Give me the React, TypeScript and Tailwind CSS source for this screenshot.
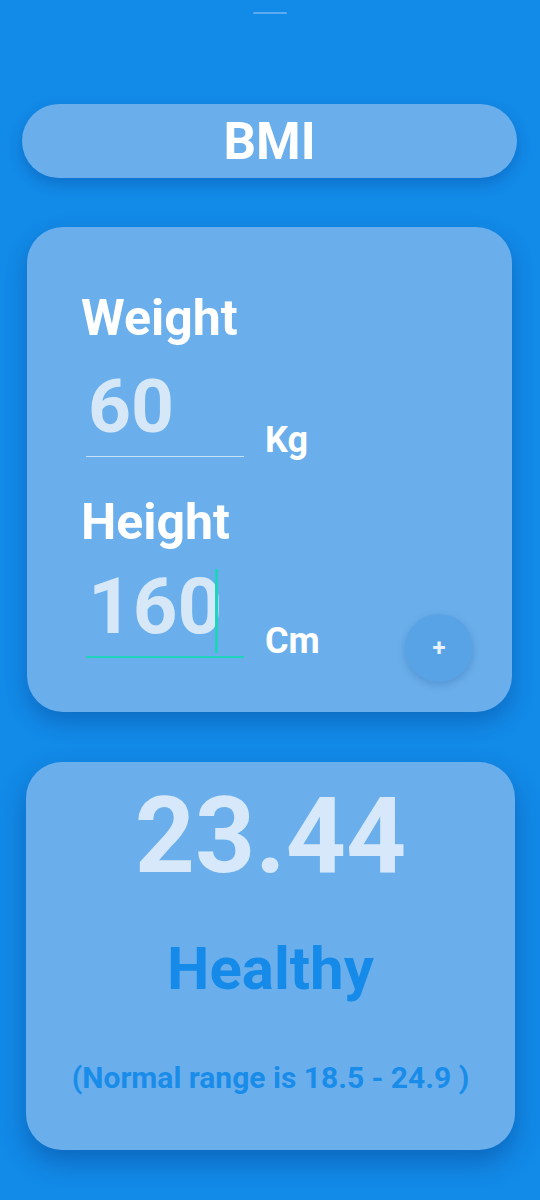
import React from "react";

const Field: React.FC<{
  label: string;
  value: string;
  unit: string;
  focused?: boolean;
  className?: string;
}> = ({ label, value, unit, focused, className }) => {
  return (
    <div className={className}>
      <div className="text-[50px] leading-none font-bold text-white">{label}</div>
      <div className={`flex items-end ${focused ? "mt-[21px]" : "mt-[26px]"}`}>
        <div
          className={`relative ml-[5px] w-[158px] ${
            focused
              ? "h-[90px] border-b-2 border-[#1fd3bd]"
              : "h-[88px] border-b border-[#c7e1f8]"
          }`}
        >
          <span
            className={`inline-block pl-[2px] font-bold leading-none text-[#d6e8f8] ${
              focused ? "text-[78px]" : "text-[75px]"
            }`}
          >
            {value}
          </span>
          {focused && (
            <span className="absolute left-[129px] top-[1px] h-[84px] w-[3px] bg-[#1fd3bd]" />
          )}
        </div>
        <span className="ml-[21px] mb-[-1px] text-[36px] leading-none font-bold text-white">
          {unit}
        </span>
      </div>
    </div>
  );
};

export default function App() {
  return (
    <div
      className="min-h-[1200px] w-full bg-[#128ae8] flex flex-col"
      style={{ fontFamily: "Roboto, 'Noto Sans', sans-serif" }}
    >
      <div className="mt-[12px] mx-auto w-[34px] h-[2px] rounded-full bg-[#5cabee]" />

      <div className="mt-[90px] ml-[22px] mr-[23px] h-[74px] rounded-full bg-[#6aafec] shadow-[0_6px_14px_rgba(0,40,110,0.25)] flex items-center justify-center">
        <span className="text-[51px] leading-none font-bold text-white">BMI</span>
      </div>

      <div className="relative mt-[49px] ml-[27px] mr-[28px] h-[485px] rounded-[36px] bg-[#6aafec] shadow-[0_10px_22px_rgba(0,40,110,0.3)] pt-[66px] pl-[54px]">
        <Field label="Weight" value="60" unit="Kg" />
        <Field label="Height" value="160" unit="Cm" focused className="mt-[40px]" />
        <button className="absolute right-[39px] bottom-[30px] w-[68px] h-[68px] rounded-full bg-[#57a3e6] shadow-[0_3px_8px_rgba(0,40,110,0.2)] flex items-center justify-center text-[24px] font-bold leading-none text-[#e6f1fb]">
          +
        </button>
      </div>

      <div className="mt-[50px] ml-[26px] mr-[25px] h-[388px] rounded-[36px] bg-[#6aafec] shadow-[0_12px_26px_rgba(0,40,110,0.35)] flex flex-col items-center pt-[22px]">
        <div className="text-[105px] leading-none font-bold text-[#d6e8f9]">23.44</div>
        <div className="mt-[50px] text-[60px] leading-none font-bold text-[#168ae8]">Healthy</div>
        <div className="mt-[64px] text-[30px] leading-none font-bold text-[#198ce9]">
          (Normal range is 18.5 - 24.9 )
        </div>
      </div>
    </div>
  );
}
